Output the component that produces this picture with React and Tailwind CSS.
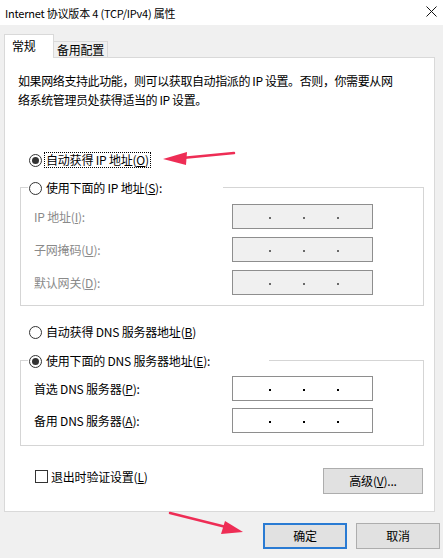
import React from "react";

function Radio({ checked }) {
  return (
    <span className="w-[13px] h-[13px] rounded-full border border-[#333333] bg-white flex items-center justify-center shrink-0">
      {checked && <span className="w-[7px] h-[7px] rounded-full bg-[#333333]" />}
    </span>
  );
}

function IpBox({ disabled }) {
  return (
    <div
      className={
        "w-[141px] h-[25px] border flex items-center pl-[36px] gap-[32px] pt-[2px] " +
        (disabled ? "bg-[#f0f0f0] border-[#8e8e8e]" : "bg-white border-[#8e8e8e]")
      }
    >
      <span className={"w-[2px] h-[2px] " + (disabled ? "bg-[#6a6a6a]" : "bg-black")} />
      <span className={"w-[2px] h-[2px] " + (disabled ? "bg-[#6a6a6a]" : "bg-black")} />
      <span className={"w-[2px] h-[2px] " + (disabled ? "bg-[#6a6a6a]" : "bg-black")} />
    </div>
  );
}

function FieldRow({ label, disabled }) {
  return (
    <div className="flex items-center h-[25px] pl-[13px]">
      <span className={"w-[198px] leading-[16px] " + (disabled ? "text-[#8a8a8a]" : "text-black")}>{label}</span>
      <IpBox disabled={disabled} />
    </div>
  );
}

export default function App() {
  return (
    <div className="relative w-[443px] h-[558px] overflow-hidden bg-[#f0f0f0] text-black text-[12px] tracking-[-0.2px] font-['Noto_Sans_CJK_SC',sans-serif]">
      {/* title bar */}
      <div className="h-[25px] bg-white flex items-center justify-between pl-[5px] pr-[6px]">
        <span className="text-[11px] tracking-[-0.2px] leading-[16px] mt-[1px] whitespace-nowrap">Internet 协议版本 4 (TCP/IPv4) 属性</span>
        <svg width="11" height="11" viewBox="0 0 11 11" className="-mt-[2px]">
          <path d="M0.5 0.5 L10.5 10.5 M10.5 0.5 L0.5 10.5" stroke="#111" strokeWidth="1" fill="none" />
        </svg>
      </div>

      {/* tabs */}
      <div className="mt-[9px] pl-[4px] h-[23px] flex items-end">
        <div className="relative z-10 w-[50px] h-[24px] -mb-[1px] bg-white border-t border-l border-r border-[#d9d9d9] pl-[7px] pt-[3px] leading-[16px]">
          常规
        </div>
        <div className="w-[54px] h-[16px] bg-[#f0f0f0] border-t border-r border-[#d9d9d9] flex items-center justify-center leading-[14px]">
          备用配置
        </div>
      </div>

      {/* panel */}
      <div className="ml-[4px] w-[431px] h-[455px] border border-[#d9d9d9] bg-white flex flex-col">
        <p className="mt-[13px] ml-[13px] leading-[19px] tracking-[-0.4px] whitespace-nowrap">
          如果网络支持此功能，则可以获取自动指派的 IP 设置。否则，你需要从网
          <br />
          络系统管理员处获得适当的 IP 设置。
        </p>

        <div className="mt-[43px] ml-[24px] h-[16px] flex items-center">
          <Radio checked />
          <span className="ml-[2px] px-[1px] h-[16px] border border-dotted border-black leading-[14px] whitespace-nowrap">
            自动获得 IP 地址(<span className="underline">O</span>)
          </span>
        </div>

        {/* group 1 */}
        <div className="mt-[19px] ml-[15px] w-[404px] border border-[#d5d5d5] pb-[10px]">
          <div className="-mt-[8px] ml-[7px] w-[195px] h-[16px] bg-white flex items-center pl-[1px]">
            <Radio />
            <span className="ml-[4px] leading-[16px] whitespace-nowrap">
              使用下面的 IP 地址(<span className="underline">S</span>):
            </span>
          </div>
          <div className="mt-[8px] flex flex-col gap-[8px]">
            <FieldRow disabled label={<>IP 地址(<span className="underline">I</span>):</>} />
            <FieldRow disabled label={<>子网掩码(<span className="underline">U</span>):</>} />
            <FieldRow disabled label={<>默认网关(<span className="underline">D</span>):</>} />
          </div>
        </div>

        <div className="mt-[18px] ml-[24px] h-[16px] flex items-center">
          <Radio />
          <span className="ml-[4px] leading-[16px] whitespace-nowrap">
            自动获得 DNS 服务器地址(<span className="underline">B</span>)
          </span>
        </div>

        {/* group 2 */}
        <div className="mt-[20px] ml-[15px] w-[404px] border border-[#d5d5d5] pb-[12px]">
          <div className="-mt-[8px] ml-[7px] w-[241px] h-[16px] bg-white flex items-center pl-[1px]">
            <Radio checked />
            <span className="ml-[4px] leading-[16px] whitespace-nowrap">
              使用下面的 DNS 服务器地址(<span className="underline">E</span>):
            </span>
          </div>
          <div className="mt-[7px] flex flex-col gap-[7px]">
            <FieldRow label={<>首选 DNS 服务器(<span className="underline">P</span>):</>} />
            <FieldRow label={<>备用 DNS 服务器(<span className="underline">A</span>):</>} />
          </div>
        </div>

        <div className="mt-[22px] flex items-start justify-between">
          <div className="mt-[2px] ml-[30px] flex items-center h-[13px]">
            <span className="w-[13px] h-[13px] border border-[#333333] bg-white shrink-0" />
            <span className="ml-[3px] leading-[16px] whitespace-nowrap">
              退出时验证设置(<span className="underline">L</span>)
            </span>
          </div>
          <div className="mr-[11px] w-[100px] h-[26px] bg-[#e1e1e1] border border-[#adadad] flex items-center justify-center leading-[16px]">
            高级(<span className="underline">V</span>)...
          </div>
        </div>
      </div>

      {/* dialog buttons */}
      <div className="mt-[11px] pr-[3px] flex justify-end gap-[9px]">
        <div className="w-[84px] h-[26px] bg-[#e1e1e1] border-2 border-[#2a7bd3] flex items-center justify-center leading-[16px]">
          确定
        </div>
        <div className="w-[84px] h-[26px] bg-[#e1e1e1] border border-[#adadad] flex items-center justify-center leading-[16px]">
          取消
        </div>
      </div>

      {/* annotation arrows */}
      <svg className="absolute left-0 top-0 pointer-events-none" width="443" height="558" viewBox="0 0 443 558">
        <line x1="234" y1="153" x2="182" y2="158" stroke="#ee2d55" strokeWidth="2.5" strokeLinecap="round" />
        <polygon points="163,159 187,152 186,165" fill="#ee2d55" />
        <line x1="170" y1="513" x2="230" y2="528" stroke="#ee2d55" strokeWidth="2.5" strokeLinecap="round" />
        <polygon points="243,532 225,521 221,534" fill="#ee2d55" />
      </svg>
    </div>
  );
}
